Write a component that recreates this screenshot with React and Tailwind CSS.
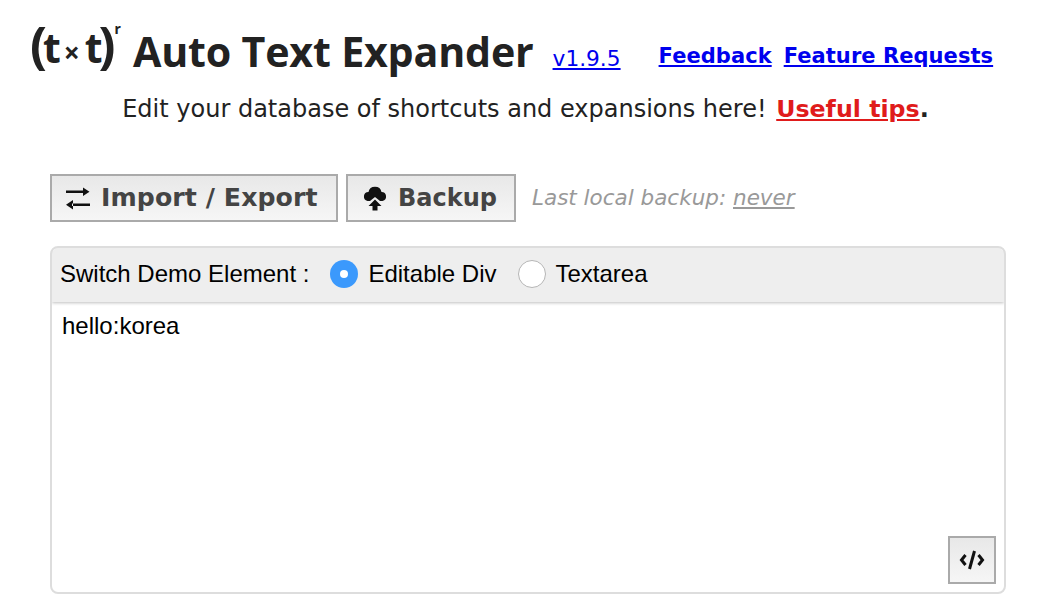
import React from "react";

const dejavu = "font-['DejaVu_Sans',sans-serif]";

const SwapIcon = () => (
  <svg width="24" height="23" viewBox="0 0 24 23" className="mr-[1px] shrink-0">
    <path d="M0 3.500h18v2.500H0zM17 .5l6.500 4.250L17 9z" fill="#111" />
    <path d="M6 16.500h18V19H6zM7 13l-7 4.750L7 22.500z" fill="#111" />
  </svg>
);

const CloudUpIcon = () => (
  <svg width="26" height="26" viewBox="0 -1 26 26" className="shrink-0">
    <path
      d="M5.500 15A4.500 4.500 0 0 1 6.500 6.100A6.600 6.600 0 0 1 19.500 6.100A4.500 4.500 0 0 1 20.500 15H18l-5-4-5 4z"
      fill="#111"
    />
    <path d="M13 13.500l6.500 6.500h-4v4.500h-5V20h-4z" fill="#111" />
  </svg>
);

const ToolButton = ({ icon, label, className }) => (
  <button
    className={`flex h-12 items-center gap-[10px] border-2 border-[#aaaaaa] bg-gradient-to-b from-[#e8e8e8] to-[#f6f6f6] pl-[14px] font-bold text-[#444444] ${className}`}
  >
    {icon}
    <span className={dejavu}>{label}</span>
  </button>
);

const App = () => {
  return (
    <div className="h-[616px] w-[1044px] overflow-hidden bg-white font-['Liberation_Sans',sans-serif] text-[#222222]">
      {/* Header */}
      <div className="flex h-[93px] items-start pl-[30px] pt-[21px]">
        <div className="flex h-[55px] w-[91px] items-baseline font-['Noto_Sans',sans-serif] font-bold leading-[46px] text-[#222222]">
          <span className="text-[50px] tracking-[-4px]">(</span>
          <span className="text-[41px]">t</span>
          <span className="ml-[3px] text-[28px]">×</span>
          <span className="ml-[5px] text-[41px] tracking-[-4px]">t</span>
          <span className="text-[50px] tracking-[-1px]">)</span>
          <span className="self-start text-[14px] leading-[16px]">r</span>
        </div>
        <h1 className="-mt-[5px] ml-[12px] font-['Open_Sans',sans-serif] text-[41.200px] font-bold leading-[70px] tracking-[-0.2px]">
          Auto Text Expander
        </h1>
        <a href="#" className={`ml-[19px] mt-[22px] text-[21.700px] text-[#0000ee] underline ${dejavu}`}>
          v1.9.5
        </a>
        <a href="#" className={`ml-[38px] mt-[20px] text-[21px] font-bold tracking-[0.06px] text-[#0000ee] underline ${dejavu}`}>
          Feedback
        </a>
        <a href="#" className={`ml-[12px] mt-[20px] text-[21px] font-bold tracking-[0.06px] text-[#0000ee] underline ${dejavu}`}>
          Feature Requests
        </a>
      </div>

      <p className={`pl-[7px] text-center text-[24px] leading-[33px] ${dejavu}`}>
        Edit your database of shortcuts and expansions here!{" "}
        <a href="#" className="ml-[2px] text-[23.700px] font-bold text-[#e01b1b] underline">
          Useful tips
        </a>
        <b>.</b>
      </p>

      {/* Toolbar */}
      <div className="ml-[50px] mt-[48px] flex items-center gap-2">
        <ToolButton icon={<SwapIcon />} label="Import / Export" className="w-[288px] text-[25.200px] tracking-[0.08px]" />
        <ToolButton icon={<CloudUpIcon />} label="Backup" className="w-[170px] text-[24px]" />
        <span className={`ml-2 text-[21.500px] italic text-[#999999] ${dejavu}`}>
          Last local backup: <span className="underline">never</span>
        </span>
      </div>

      {/* Demo panel */}
      <div className="relative ml-[50px] mt-6 h-[348px] w-[956px] overflow-hidden rounded-lg border-2 border-[#dddddd]">
        <div className="flex h-[54px] items-center bg-[#eeeeee] pb-[3px] pl-2 text-[24px] text-black shadow-[0_1px_3px_rgba(0,0,0,0.25)]">
          <span>Switch Demo Element :</span>
          <span className="ml-[21px] flex h-7 w-7 items-center justify-center rounded-full bg-[#3b99fc]">
            <span className="h-2 w-2 rounded-full bg-white" />
          </span>
          <span className="ml-[10px]">Editable Div</span>
          <span className="ml-[22px] h-7 w-7 rounded-full border border-[#b5b5b5] bg-white" />
          <span className="ml-[9px]">Textarea</span>
        </div>
        <div className="px-[10px] pt-[9px] text-[24px] leading-[30px] text-black">hello:korea</div>
        <button className="absolute bottom-[8px] right-[8px] flex h-12 w-12 items-center justify-center border-2 border-[#aaaaaa] bg-gradient-to-b from-[#e8e8e8] to-[#f6f6f6]">
          <svg width="26" height="22" viewBox="0 0 26 22" fill="none" stroke="#111" strokeWidth="3">
            <path d="M6.500 6l-4 5 4 5M19.500 6l4 5-4 5" />
            <path d="M15.500 2l-5 18" />
          </svg>
        </button>
      </div>
    </div>
  );
};

export default App;
